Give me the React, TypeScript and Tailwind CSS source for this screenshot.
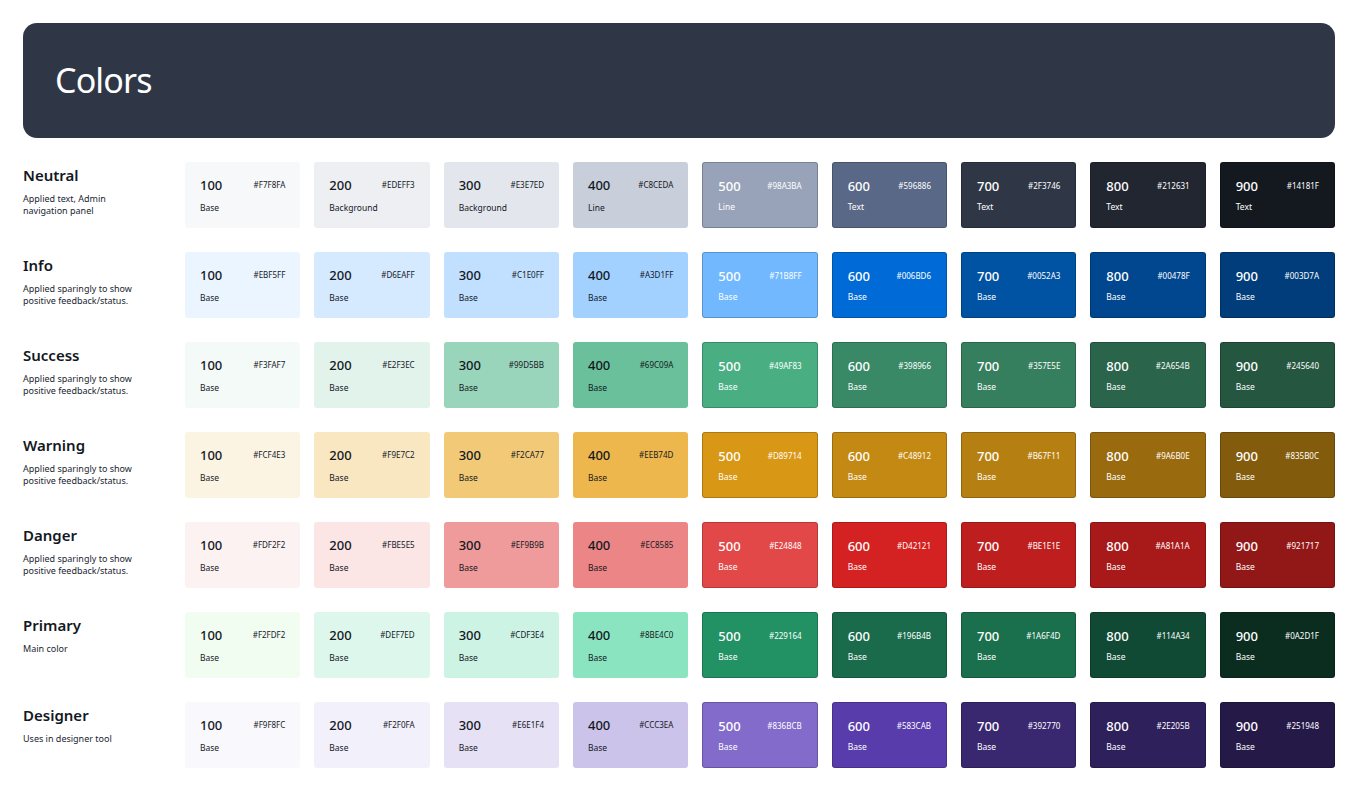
const groups: { name: string; desc: string[]; colors: string[]; labels?: string[] }[] = [
  {
    name: 'Neutral',
    desc: ['Applied text, Admin', 'navigation panel'],
    colors: ['F7F8FA', 'EDEFF3', 'E3E7ED', 'C8CEDA', '98A3BA', '596886', '2F3746', '212631', '14181F'],
    labels: ['Base', 'Background', 'Background', 'Line', 'Line', 'Text', 'Text', 'Text', 'Text'],
  },
  { name: 'Info', desc: ['Applied sparingly to show', 'positive feedback/status.'], colors: ['EBF5FF', 'D6EAFF', 'C1E0FF', 'A3D1FF', '71B8FF', '006BD6', '0052A3', '00478F', '003D7A'] },
  { name: 'Success', desc: ['Applied sparingly to show', 'positive feedback/status.'], colors: ['F3FAF7', 'E2F3EC', '99D5BB', '69C09A', '49AF83', '398966', '357E5E', '2A654B', '245640'] },
  { name: 'Warning', desc: ['Applied sparingly to show', 'positive feedback/status.'], colors: ['FCF4E3', 'F9E7C2', 'F2CA77', 'EEB74D', 'D89714', 'C48912', 'B67F11', '9A6B0E', '835B0C'] },
  { name: 'Danger', desc: ['Applied sparingly to show', 'positive feedback/status.'], colors: ['FDF2F2', 'FBE5E5', 'EF9B9B', 'EC8585', 'E24848', 'D42121', 'BE1E1E', 'A81A1A', '921717'] },
  { name: 'Primary', desc: ['Main color'], colors: ['F2FDF2', 'DEF7ED', 'CDF3E4', '8BE4C0', '229164', '196B4B', '1A6F4D', '114A34', '0A2D1F'] },
  { name: 'Designer', desc: ['Uses in designer tool'], colors: ['F9F8FC', 'F2F0FA', 'E6E1F4', 'CCC3EA', '836BCB', '583CAB', '392770', '2E205B', '251948'] },
];

const shades = ['100', '200', '300', '400', '500', '600', '700', '800', '900'];

export default function App() {
  return (
    <div className="min-h-screen bg-white px-[23px] pt-[23px] font-['Inter','Noto_Sans',sans-serif] text-[#14181F]">
      <div className="flex h-[115px] items-center rounded-[14px] bg-[#2F3746] pl-[32px]">
        <h1 className="text-[34px] font-normal tracking-tight text-white">Colors</h1>
      </div>
      <div className="mt-[24px] flex flex-col gap-[24px]">
        {groups.map((g) => (
          <div key={g.name} className="flex">
            <div className="w-[162px] shrink-0 pt-[3px]">
              <div className="text-[15px] font-semibold leading-5">{g.name}</div>
              <div className="mt-[8px] text-[9px] leading-[12px] text-[#212631]">
                {g.desc.map((d) => (
                  <div key={d}>{d}</div>
                ))}
              </div>
            </div>
            <div className="grid flex-1 grid-cols-9 gap-[14px]">
              {g.colors.map((c, i) => {
                const dark = i >= 4;
                return (
                  <div
                    key={c}
                    className={`flex h-[66px] flex-col justify-between rounded-[3px] px-[15px] pb-[14px] pt-[15px] font-['Open_Sans','Noto_Sans',sans-serif] ${dark ? 'border border-black/20 text-white' : 'text-[#14181F]'}`}
                    style={{ backgroundColor: `#${c}` }}
                  >
                    <div className="flex items-center justify-between">
                      <span className="text-[13px] font-medium leading-4">{shades[i]}</span>
                      <span className="text-[8px] leading-3">#{c}</span>
                    </div>
                    <div className="text-[8.5px] leading-3">{g.labels ? g.labels[i] : 'Base'}</div>
                  </div>
                );
              })}
            </div>
          </div>
        ))}
      </div>
    </div>
  );
}
